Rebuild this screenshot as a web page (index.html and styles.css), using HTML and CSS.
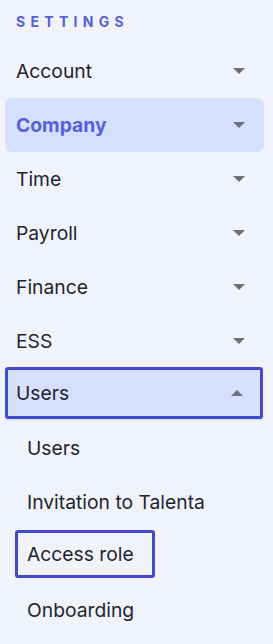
FILE: index.html
```html
<!DOCTYPE html>
<html>
<head>
<meta charset="utf-8">
<link rel="stylesheet" href="styles.css">
</head>
<body>
<nav class="sidebar">
  <div class="heading">SETTINGS</div>
  <ul class="menu">
    <li class="item"><span>Account</span><i class="caret"></i></li>
    <li class="item active"><span>Company</span><i class="caret"></i></li>
    <li class="item"><span>Time</span><i class="caret"></i></li>
    <li class="item"><span>Payroll</span><i class="caret"></i></li>
    <li class="item"><span>Finance</span><i class="caret"></i></li>
    <li class="item"><span>ESS</span><i class="caret"></i></li>
    <li class="item open marked"><span>Users</span><i class="caret up"></i></li>
    <li class="sub"><span class="sub-label">Users</span></li>
    <li class="sub"><span class="sub-label">Invitation to Talenta</span></li>
    <li class="sub"><span class="sub-label boxed">Access role</span></li>
    <li class="sub"><span class="sub-label">Onboarding</span></li>
  </ul>
</nav>
</body>
</html>
```

FILE: styles.css
```css
html, body {
  margin: 0;
  padding: 0;
  background: #f0f4fa;
}
body {
  font-family: Inter, "Noto Sans", sans-serif;
  color: #1e2330;
  width: 273px;
  height: 644px;
  overflow: hidden;
}
.sidebar {
  padding: 12px 9px 0 5px;
}
.heading {
  padding-left: 11px;
  font-size: 14px;
  font-weight: 700;
  letter-spacing: 5.3px;
  color: #5461d9;
  line-height: 20px;
  height: 32px;
}
.menu {
  list-style: none;
  margin: 0;
  padding: 0;
}
.item {
  height: 54px;
  box-sizing: border-box;
  display: flex;
  align-items: center;
  justify-content: space-between;
  padding: 0 19px 0 11px;
  font-size: 19.3px;
  border-radius: 7px;
}
.item.active {
  background: #d6dffd;
  color: #5461d9;
  font-weight: 700;
}
.item.marked {
  background: #d6dffd;
  border: 3px solid #4349cc;
  border-radius: 3px;
  height: 52px;
  margin-top: -1px;
  margin-bottom: 2px;
  padding: 0 17px 0 8px;
  box-shadow: 0 2px 0 #dfe5fb;
  margin-right: 1px;
}
.caret {
  width: 0;
  height: 0;
  border-left: 6px solid transparent;
  border-right: 6px solid transparent;
  border-top: 6px solid #6b7080;
}
.caret.up {
  border-top: 0;
  border-bottom: 6px solid #6b7080;
}
.sub {
  height: 54px;
  display: flex;
  align-items: center;
  font-size: 19.3px;
  padding-left: 22px;
}
.sub-label {
  display: inline-block;
}
.boxed {
  border: 3px solid #4349cc;
  border-radius: 3px;
  height: 48px;
  box-sizing: border-box;
  display: flex;
  align-items: center;
  padding: 0 18px 0 9px;
  margin-left: -12px;
  margin-top: -5px;
}
```
